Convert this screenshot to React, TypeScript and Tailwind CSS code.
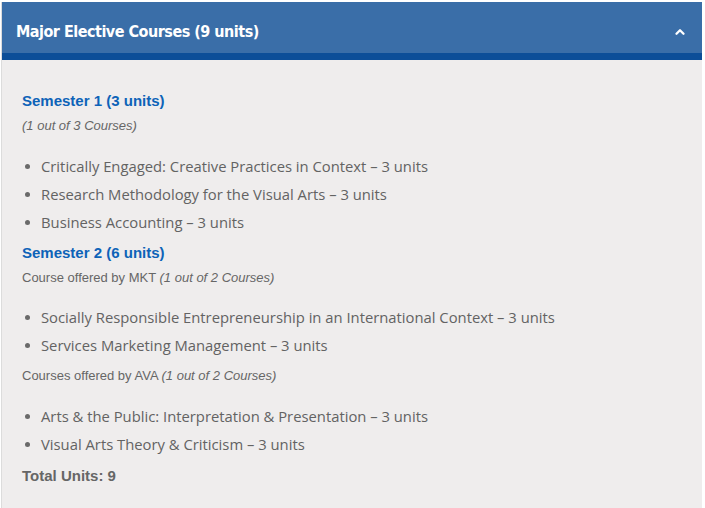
import { ChevronUp } from "lucide-react";

const sem1 = [
  "Critically Engaged: Creative Practices in Context – 3 units",
  "Research Methodology for the Visual Arts – 3 units",
  "Business Accounting – 3 units",
];
const mkt = [
  "Socially Responsible Entrepreneurship in an International Context – 3 units",
  "Services Marketing Management – 3 units",
];
const ava = [
  "Arts & the Public: Interpretation & Presentation – 3 units",
  "Visual Arts Theory & Criticism – 3 units",
];

function CourseList({ items }: { items: string[] }) {
  return (
    <ul className="flex flex-col">
      {items.map((c) => (
        <li key={c} className="flex items-center h-[28px] text-[14.8px] text-[#636363] font-['Open_Sans',sans-serif]">
          <span className="w-[5px] h-[5px] rounded-full bg-[#6a6a6a] ml-[3px] mr-[11px]" />
          {c}
        </li>
      ))}
    </ul>
  );
}

export default function App() {
  return (
    <div className="w-[705px] h-[508px] bg-white pt-[2px] pr-[3px] pl-[1px]">
      <div className="h-full bg-[#efeded] border-l border-[#dcdcdc]">
        {/* Header */}
        <div className="h-[51px] bg-[#3a6ea8] flex items-center justify-between pt-[9px] pl-[14px] pr-[15px]">
          <h2 className="text-white text-[16px] font-bold tracking-[-0.5px] font-['DejaVu_Sans_Condensed','DejaVu_Sans',sans-serif]">
            Major Elective Courses (9 units)
          </h2>
          <ChevronUp className="w-[14px] h-[14px] text-white" strokeWidth={4} />
        </div>
        <div className="h-[7px] bg-[#0c4e98]" />

        {/* Body */}
        <div className="pl-[20px] pt-[32px] font-['Liberation_Sans',sans-serif]">
          <h3 className="text-[#0d63b8] font-bold text-[15px] leading-[18px]">Semester 1 (3 units)</h3>
          <p className="text-[#666] italic text-[13px] mt-[8px] leading-[16px]">(1 out of 3 Courses)</p>
          <div className="mt-[18px]">
            <CourseList items={sem1} />
          </div>

          <h3 className="text-[#0d63b8] font-bold text-[15px] leading-[18px] mt-[8px]">Semester 2 (6 units)</h3>
          <p className="text-[#666] text-[13px] mt-[8px] leading-[16px]">
            Course offered by MKT <i>(1 out of 2 Courses)</i>
          </p>
          <div className="mt-[17px]">
            <CourseList items={mkt} />
          </div>
          <p className="text-[#666] text-[13px] mt-[9px] leading-[16px]">
            Courses offered by AVA <i>(1 out of 2 Courses)</i>
          </p>
          <div className="mt-[18px]">
            <CourseList items={ava} />
          </div>
          <p className="text-[#666] font-bold text-[15px] mt-[9px] leading-[18px]">Total Units: 9</p>
        </div>
      </div>
    </div>
  );
}
